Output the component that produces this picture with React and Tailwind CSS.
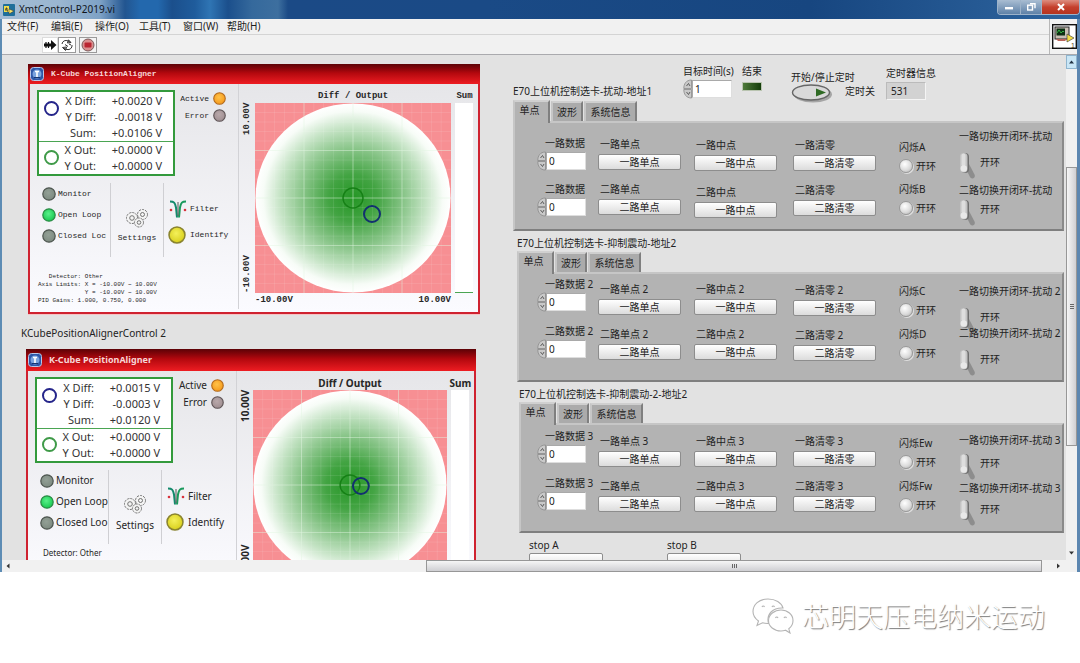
import React, { useId } from "react";

const MENUS = ["文件(F)", "编辑(E)", "操作(O)", "工具(T)", "窗口(W)", "帮助(H)"];

function TitleBar() {
  return (
    <header className="flex h-[19px] shrink-0 items-start justify-between bg-[linear-gradient(90deg,#a3bcd4_0px,#9ab6d0_60px,#7ea2c6_100px,#225590_125px,#2368ad_140px,#2368ad_158px,#1b4f8c_172px,#1f5c9c_195px,#2f75b4_210px,#1b4f8c_228px,#35699c_252px,#3d6f9f_278px,#1b4a86_288px,#1a4a86_45%,#174680_75%,#2e659f_100%)] pl-[3px]">
      <h1 className="flex h-[19px] items-center gap-[4px] text-[10px] text-[#10151c]">
        <svg viewBox="0 0 12 12" className="size-3" aria-hidden="true">
          <rect width="12" height="12" rx="1" fill="#1f6f9a" />
          <rect x="1" y="2" width="5" height="6" fill="#f2dc4c" />
          <path d="M2 6h1V4h1v3h1" stroke="#222" strokeWidth=".8" fill="none" />
          <path d="M6 5l5 2-5 3z" fill="#f6e36a" stroke="#333" strokeWidth=".5" />
        </svg>
        XmtControl-P2019.vi
      </h1>
      <div className="flex h-[15px] overflow-hidden rounded-b-[4px] border border-t-0 border-[#9db3ca]">
        <button aria-label="最小化" className="flex w-[23px] items-center justify-center border-r border-[#9db3ca] bg-linear-to-b from-[#a9bdd2] to-[#5f82a8]">
          <svg viewBox="0 0 10 8" className="h-2 w-[10px]"><rect x="1" y="4" width="8" height="2.4" fill="#fff" /></svg>
        </button>
        <button aria-label="还原" className="flex w-[21px] items-center justify-center border-r border-[#9db3ca] bg-linear-to-b from-[#a9bdd2] to-[#5f82a8]">
          <svg viewBox="0 0 10 8" className="h-2 w-[10px]" fill="none" stroke="#fff" strokeWidth="1.4"><path d="M4 .8h5v4.5" /><rect x="1.7" y="2.2" width="4.8" height="4.8" /></svg>
        </button>
        <button aria-label="关闭" className="flex w-[37px] items-center justify-center bg-linear-to-b from-[#dc8d80] via-[#c5402d] to-[#b5341f]">
          <svg viewBox="0 0 10 8" className="h-2 w-[10px]" stroke="#fff" strokeWidth="2"><path d="M2 1l6 6M8 1L2 7" /></svg>
        </button>
      </div>
    </header>
  );
}

function MenuAndTools() {
  return (
    <div className="flex shrink-0 border-b border-[#aaaaae] bg-[#f1f1f1]">
      <div className="min-w-0 flex-1">
        <nav className="flex h-4 items-center gap-[10px] border-b border-[#d4d4d4] pl-[5px] text-[10px] text-[#1c1c1c]">
          {MENUS.map((m) => (
            <button key={m} className="w-[34px] text-left whitespace-nowrap">{m}</button>
          ))}
        </nav>
        <div className="flex h-[19px] items-center pl-10">
          <button aria-label="运行" className="flex h-4 w-4 items-center justify-center border border-[#dcdcdc] bg-white">
            <svg viewBox="0 0 14 12" className="h-3 w-[14px]"><path d="M1 4.500h7V1l5.500 5L8 11V7.500H1z" fill="#111" /><path d="M3 3v6M5.500 3v6" stroke="#111" strokeWidth="1.2" /></svg>
          </button>
          <button aria-label="连续运行" className="flex h-4 w-[18px] items-center justify-center border border-[#9a9a9a] bg-white">
            <svg viewBox="0 0 14 12" className="h-3 w-[14px]" fill="none" stroke="#333" strokeWidth="1">
              <path d="M2 5a4 4 0 0 1 6-3l2 1M12 6a4 4 0 0 1-5 4.500L4 9.500" /><path d="M8.500.8L11 3.500 7.500 4zM5.500 11.500L2.500 8.500l4-.5z" /><path d="M5 5.500l3 2M9 5l2 1" />
            </svg>
          </button>
          <button aria-label="中止执行" className="ml-[3px] flex h-4 w-[18px] items-center justify-center border border-[#9a9a9a] bg-[#f4f4f4]">
            <svg viewBox="0 0 14 14" className="size-[14px]"><circle cx="7" cy="7" r="6" fill="#d98f8f" stroke="#7a5a5a" strokeWidth="1" /><rect x="3.500" y="4.500" width="7" height="5" rx="1" fill="#bb2632" /></svg>
          </button>
        </div>
      </div>
      <div className="flex w-7 items-center justify-end border-l border-[#b8b8b8]">
        <svg viewBox="0 0 25 25" className="size-[25px]" aria-hidden="true">
          <rect x=".7" y=".7" width="23.600" height="23.600" fill="#fff" stroke="#111" strokeWidth="1.400" />
          <rect x="3" y="3" width="14" height="12" fill="#c9bfb4" stroke="#222" />
          <rect x="4.500" y="4.500" width="8.500" height="7" fill="#0d2f12" />
          <path d="M5 9l2-3 2 3 2-2 1 1" fill="none" stroke="#3fd04f" strokeWidth=".8" />
          <path d="M4 15h11l-2 2H6z" fill="#b9645a" />
          <path d="M15 10l7 4-7 4z" fill="#f4dd45" stroke="#333" strokeWidth=".6" />
          <text x="19" y="23.500" fontSize="7" fill="#5b3a12" fontFamily="Liberation Sans">1</text>
        </svg>
      </div>
    </div>
  );
}

function Led({ color, size = "size-[14px]" }) {
  const id = useId();
  return (
    <svg viewBox="0 0 14 14" className={`${size} shrink-0`} aria-hidden="true">
      <defs>
        <radialGradient id={id} cx=".45" cy=".4" r=".6">
          <stop offset="0" stopColor={color[0]} />
          <stop offset="1" stopColor={color[1]} />
        </radialGradient>
      </defs>
      <circle cx="7" cy="7" r="6.200" fill={`url(#${id})`} stroke={color[2]} strokeWidth="1.200" />
    </svg>
  );
}

const ORANGE = ["#ffc24a", "#f59a1b", "#b36a1c"];
const MUTED = ["#b9a9ab", "#a08f92", "#5e5456"];
const GRAY = ["#93a096", "#7d8a80", "#4d554f"];
const GREEN = ["#5af08a", "#18c850", "#2a8a45"];
const YELLOW = ["#f4f05a", "#d8cf1c", "#8a8430"];

function Plot({ point }) {
  const id = useId();
  const minor = Array.from({ length: 19 }, (_, i) => (i + 1) * 9.8);
  return (
    <svg viewBox="0 0 196 190" preserveAspectRatio="none" className="h-[190px] w-full bg-[#f78f93]" role="img" aria-label="Diff / Output">
      <defs>
        <radialGradient id={id}>
          <stop offset="0" stopColor="#249624" />
          <stop offset=".25" stopColor="#43a443" />
          <stop offset=".5" stopColor="#83c283" />
          <stop offset=".75" stopColor="#c6e4c6" />
          <stop offset=".92" stopColor="#f7fcf7" />
          <stop offset="1" stopColor="#ffffff" />
        </radialGradient>
      </defs>
      <ellipse cx="98" cy="95" rx="97.500" ry="94.500" fill={`url(#${id})`} />
      <g stroke="#fff" strokeOpacity=".1">
        {minor.map((v) => (
          <path key={v} d={`M${v} 0V190M0 ${v * 0.97}H196`} />
        ))}
      </g>
      <path d="M49 0V190M98 0V190M147 0V190M0 47.500H196M0 95H196M0 142.500H196" stroke="#dff5df" strokeOpacity=".4" />
      <circle cx="98" cy="95" r="10" fill="none" stroke="#168016" strokeWidth="1.500" />
      <circle cx={point[0]} cy={point[1]} r="8" fill="none" stroke="#12306f" strokeWidth="2" />
    </svg>
  );
}

function Readout({ values }) {
  return (
    <div className="w-[138px] border-2 border-[#339a3c] bg-white text-[11px] leading-4 text-[#333]">
      {[
        { ring: "border-[#25258a]", rows: [["X Diff:", values[0]], ["Y Diff:", values[1]], ["Sum:", values[2]]] },
        { ring: "border-[#3f9a48]", rows: [["X Out:", "+0.0000 V"], ["Y Out:", "+0.0000 V"]] },
      ].map((group, i) => (
        <div key={group.ring} className={i ? "flex border-t border-[#4aa552]" : "flex pt-px"}>
          <span className={`mt-2 ml-[5px] size-[15px] shrink-0 rounded-full border-2 ${group.ring}`} />
          <dl className="grid flex-1 grid-cols-[37px_66px]">
            {group.rows.map(([k, v]) => (
              <React.Fragment key={k}>
                <dt className="text-right whitespace-nowrap">{k}</dt>
                <dd className="text-right whitespace-nowrap">{v}</dd>
              </React.Fragment>
            ))}
          </dl>
        </div>
      ))}
    </div>
  );
}

function Gears() {
  return (
    <svg viewBox="0 0 24 20" className="h-5 w-6" fill="#f4f4f4" stroke="#666" strokeWidth=".9" aria-hidden="true">
      <circle cx="7" cy="10" r="5.500" strokeDasharray="2.200 1" />
      <circle cx="7" cy="10" r="2.300" />
      <circle cx="17.500" cy="6.500" r="5" strokeDasharray="2.200 1" />
      <circle cx="17.500" cy="6.500" r="2" />
      <circle cx="14" cy="14.500" r="4.500" strokeDasharray="2.200 1" />
      <circle cx="14" cy="14.500" r="1.800" />
    </svg>
  );
}

function FilterIcon() {
  return (
    <svg viewBox="0 0 20 20" className="size-5" fill="none" aria-hidden="true">
      <path d="M2 2.500c4 0 5 1 6 6l1 10" stroke="#138a6c" strokeWidth="2" />
      <path d="M18 2.500c-4 0-5 1-6 6l-1 10" stroke="#1a9a5c" strokeWidth="2" />
      <path d="M10 3v14" stroke="#555" strokeWidth="1" />
      <circle cx="3" cy="11" r="1.300" fill="#d8323c" />
      <circle cx="17" cy="11" r="1.300" fill="#d8323c" />
    </svg>
  );
}

function Aligner({ title, values, mono, point, details, limits, className }) {
  const small = mono ? "font-[Liberation_Mono,monospace] text-[8px]" : "text-[10px]";
  const axis = mono ? "font-[Liberation_Mono,monospace] text-[9px] font-bold" : "text-[10px] font-bold";
  return (
    <section className={`border-x-2 border-b-2 border-[#cf2230] shadow-[0_1px_0_#f6c4c4] ${className}`}>
      <h2 className={`-mx-[2px] flex items-center gap-[7px] bg-linear-to-b from-[#5c0206] via-[#b3080e] via-45% to-[#ee1c22] pl-[2px] font-bold text-[#f7d6d6] ${mono ? "h-5 font-[Liberation_Mono,monospace] text-[8px]" : "h-[22px] text-[9px]"}`}>
        <svg viewBox="0 0 14 14" className="size-[14px]" aria-hidden="true">
          <rect x=".5" y=".5" width="13" height="13" rx="3" fill="#2d57a8" stroke="#b8c8e8" strokeWidth="1" />
          <circle cx="7" cy="7" r="4.500" fill="#7aa3de" />
          <path d="M5 4.500h4M7 4.500v6" stroke="#fff" strokeWidth="1.600" />
          <path d="M4 10.500h6" stroke="#17356f" strokeWidth="1" />
        </svg>
        {title}
      </h2>
      <div className="flex bg-linear-to-b from-[#e6e6e9] to-[#fbfbff] pb-[3px] text-[#262626]">
        <div className="w-[209px] shrink-0 border-r border-[#d2d2d6] pl-[7px]">
          <div className="flex pt-[6px]">
            <Readout values={values} />
            <ul className={`w-[51px] ${small}`}>
              {[["Active", ORANGE], ["Error", MUTED]].map(([name, c]) => (
                <li key={name} className="flex h-[17px] items-center justify-end gap-1">
                  {name}
                  <Led color={c} size="size-[13px]" />
                </li>
              ))}
            </ul>
          </div>
          <div className={`mt-[7px] flex h-[74px] ${small}`}>
            <ul className="w-[73px] pl-[5px]">
              {[["Monitor", GRAY], ["Open Loop", GREEN], [mono ? "Closed Loc" : "Closed Loo", GRAY]].map(([name, c]) => (
                <li key={name} className="flex h-[21px] items-center gap-[2px] overflow-hidden whitespace-nowrap">
                  <Led color={c} />
                  {name}
                </li>
              ))}
            </ul>
            <button className="flex w-[54px] flex-col items-center justify-center gap-1 border-x border-[#cfcfd3] pt-3">
              <Gears />
              Settings
            </button>
            <div className="flex flex-col justify-center gap-1 pt-1 pl-1">
              <button className="flex h-[22px] items-center gap-[2px]"><FilterIcon />Filter</button>
              <button className="flex h-[22px] items-center gap-1"><Led color={YELLOW} size="size-[18px]" />Identify</button>
            </div>
          </div>
          <pre className={mono ? "mt-4 pl-px font-[Liberation_Mono,monospace] text-[6px] leading-2" : "mt-1 pl-2 font-[Noto_Sans,sans-serif] text-[8px] leading-[10px]"}>
            {details}
          </pre>
        </div>
        <div className={`grid min-w-0 flex-1 grid-cols-[16px_1fr_27px] pt-[5px] ${axis}`}>
          <span />
          <span className="h-[14px] text-center leading-[14px]">Diff / Output</span>
          <span className="h-[14px] text-center leading-[14px]">Sum</span>
          <div className="flex rotate-180 items-center justify-between leading-3 [writing-mode:vertical-rl]">
            <span>-10.00V</span>
            <span>10.00V</span>
          </div>
          <Plot point={point} />
          <div className="mr-[5px] ml-1 flex h-[190px] flex-col justify-end bg-white"><div className="h-px bg-[#4aa552]" /></div>
          {limits && (
            <div className="col-start-2 flex h-4 items-center justify-between"><span>{limits[0]}</span><span>{limits[1]}</span></div>
          )}
        </div>
      </div>
    </section>
  );
}

function Spinner() {
  return (
    <button aria-label="增减" className="shrink-0">
      <svg viewBox="0 0 9 20" className="h-5 w-[9px]" fill="#c9c9c9" stroke="#8a8a8a" strokeWidth=".8">
        <path d="M8.500 1C3 1 .8 5 .8 9.500h7.700z" /><path d="M8.500 19C3 19 .8 15 .8 10.500h7.700z" />
        <path d="M3.500 7L5.500 4.500 7 7M3.500 13L5.500 15.500 7 13" fill="none" stroke="#444" />
      </svg>
    </button>
  );
}

function NumberField({ label, value, labelClass }) {
  const id = useId();
  return (
    <>
      <label htmlFor={id} className={`block h-[14px] leading-[14px] whitespace-nowrap ${labelClass}`}>{label}</label>
      <div className="mt-[2px] flex h-[18px] items-center">
        <Spinner />
        <input id={id} defaultValue={value} className="h-[18px] w-10 border border-t-[#a9a9a9] border-r-[#dedede] border-b-[#dedede] border-l-[#a9a9a9] bg-white px-[2px] text-[10px] text-[#222]" />
      </div>
    </>
  );
}

function PushButton({ label, text }) {
  const id = useId();
  return (
    <>
      <label htmlFor={id} className="block h-[14px] pl-[2px] leading-[14px] whitespace-nowrap">{label}</label>
      <button id={id} className="mt-[3px] flex h-4 w-[83px] items-center justify-center rounded-[2px] border border-[#8d8d8d] bg-linear-to-b from-white to-[#dcdcdc] leading-none">{text}</button>
    </>
  );
}

function RoundLed({ label }) {
  const id = useId();
  return (
    <>
      <label htmlFor={id} className="block h-[14px] leading-[14px] whitespace-nowrap">{label}</label>
      <div className="mt-1 flex h-4 items-center gap-[3px]">
        <input id={id} type="checkbox" className="size-[14px] appearance-none rounded-full border border-[#9a9a9a] bg-[radial-gradient(circle_at_40%_35%,#ffffff,#dcdcdc_55%,#b0b0b0)] shadow-[1px_1px_0_#dedede]" />
        <span>开环</span>
      </div>
    </>
  );
}

function Lever({ label, gap }) {
  const id = useId();
  return (
    <>
      <label htmlFor={id} className="block h-[14px] leading-[14px] whitespace-nowrap">{label}</label>
      <div className={`flex h-6 items-start gap-1 ${gap}`}>
        <button id={id} role="switch" aria-checked="false" aria-label={label}>
          <svg viewBox="0 0 17 27" className="h-[27px] w-[17px]">
            <path d="M7 17L10 12L15.500 22.500C17 26 13 28 11 25z" fill="#8d8d8d" />
            <rect x="2" y="1" width="8" height="20" rx="4" fill="#6f6f6f" />
            <rect x="1" y="1" width="7.500" height="19.500" rx="3.700" fill="#c4c4c4" />
            <rect x="2.500" y="1.500" width="4" height="13" rx="2" fill="#dedede" />
            <ellipse cx="4.800" cy="16.500" rx="3.200" ry="3.200" fill="#e9e9e9" />
          </svg>
        </button>
        <span className="leading-5">开环</span>
      </div>
    </>
  );
}

const CARDS = [
  {
    title: "E70上位机控制选卡-扰动-地址1", indent: "", suffix: "", single2: "二路单点", leds: ["闪烁A", "闪烁B"],
    pads: ["pt-[15px]", "pt-4", "pt-[17px]", "pt-[17px]", "pt-[19px]", "pt-2"],
    pitch: ["h-[46px]", "h-[45px]", "h-[47px]", "h-[45px]", "h-[42px]", "h-[54px]"],
    gaps: ["mt-[9px]", "mt-[2px]"],
  },
  {
    title: "E70上位机控制选卡-抑制震动-地址2", indent: "ml-1", suffix: " 2", single2: "二路单点 2", leds: ["闪烁C", "闪烁D"],
    pads: ["pt-[5px]", "pt-[10px]", "pt-[10px]", "pt-[11px]", "pt-3", "pt-3"],
    pitch: ["h-[47px]", "h-[45px]", "h-[45px]", "h-[45px]", "h-[43px]", "h-[42px]"],
    gaps: ["mt-[9px]", "mt-[9px]"],
  },
  {
    title: "E70上位机控制选卡-抑制震动-2-地址2", indent: "ml-[6px]", suffix: " 3", single2: "二路单点", leds: ["闪烁Ew", "闪烁Fw"],
    pads: ["pt-[6px]", "pt-[11px]", "pt-[11px]", "pt-[11px]", "pt-[13px]", "pt-[10px]"],
    pitch: ["h-[47px]", "h-[45px]", "h-[45px]", "h-[45px]", "h-[43px]", "h-[48px]"],
    gaps: ["mt-[6px]", "mt-[4px]"],
  },
];

function CardBody({ card }) {
  const s = card.suffix;
  const columns = [
    ["一路数据", "二路数据"].map((t) => <NumberField key={t} label={t + s} value="0" labelClass="pl-2" />),
    [<PushButton key="a" label={"一路单点" + s} text="一路单点" />, <PushButton key="b" label={card.single2} text="二路单点" />],
    ["一路中点", "二路中点"].map((t) => <PushButton key={t} label={t + s} text="一路中点" />),
    ["一路清零", "二路清零"].map((t) => <PushButton key={t} label={t + s} text={t} />),
    card.leds.map((t) => <RoundLed key={t} label={t} />),
    ["一路切换开闭环-扰动", "二路切换开闭环-扰动"].map((t, i) => <Lever key={t} label={t + s} gap={card.gaps[i]} />),
  ];
  return (
    <div role="tabpanel" className="grid h-[110px] grid-cols-[61px_96px_99px_106px_60px_105px] justify-end border-2 border-t-[#c6c6c6] border-r-[#8a8a8a] border-b-[#7f7f7f] border-l-[#c6c6c6] bg-[#b3b3b3]">
      {columns.map((groups, c) => (
        <div key={c} className={`-mt-[2px] -mr-[2px] ml-[2px] ${card.pads[c]}`}>
          {groups.map((g, i) => (
            <div key={i} className={card.pitch[c]}>{g}</div>
          ))}
        </div>
      ))}
    </div>
  );
}

function Tabs() {
  return (
    <div role="tablist" className="flex h-5 items-end gap-px">
      <button role="tab" aria-selected="true" className="-mb-[2px] flex h-[23px] w-[37px] items-center justify-center border-2 border-b-0 border-t-[#d0d0d0] border-r-[#7f7f7f] border-l-[#c6c6c6] bg-[#b3b3b3] pr-1 pb-1">单点</button>
      <button role="tab" aria-selected="false" className="flex h-5 w-8 items-center justify-center border-2 border-b-0 border-t-[#cfcfcf] border-r-[#7f7f7f] border-l-[#c6c6c6] bg-[#ababab]">波形</button>
      <button role="tab" aria-selected="false" className="flex h-5 w-[53px] items-center justify-center border-2 border-b-0 border-t-[#cfcfcf] border-r-[#7f7f7f] border-l-[#c6c6c6] bg-[#ababab] whitespace-nowrap">系统信息</button>
    </div>
  );
}

function TimerRow() {
  return (
    <div className="flex h-11 items-start whitespace-nowrap">
      <h2 className="w-[170px] pt-[29px] leading-[14px]">{CARDS[0].title}</h2>
      <div className="w-[59px] pt-[9px]">
        <NumberField label="目标时间(s)" value="1" labelClass="" />
      </div>
      <div className="w-[49px] pt-[9px] leading-[14px]">
        结束
        <div className="mt-1 h-[9px] w-5 border border-[#b9c4b0] bg-linear-to-r from-[#4e7a3a] to-[#143d0a]" />
      </div>
      <div className="w-[54px] pt-[15px] leading-[14px]">
        <label htmlFor="timer">开始/停止定时</label>
        <button id="timer" className="block">
          <svg viewBox="0 0 42 19" className="h-[19px] w-[42px]">
            <ellipse cx="22" cy="10.500" rx="19" ry="8" fill="#a5a5a5" />
            <ellipse cx="20" cy="8.500" rx="18.500" ry="7.500" fill="#d9d9d9" stroke="#666" strokeWidth="1.400" />
            <path d="M25 4.500l10 4-10 4z" fill="#2f6a24" />
          </svg>
        </button>
      </div>
      <span className="w-[41px] pt-[29px] leading-[14px]">定时关</span>
      <div className="pt-[11px] leading-[14px]">
        定时器信息
        <output className="mt-[2px] flex h-[18px] w-10 items-center border border-t-[#bbb] border-r-[#f4f4f4] border-b-[#f4f4f4] border-l-[#bbb] bg-[#d2d2d2] px-1">531</output>
      </div>
    </div>
  );
}

function Scrollbars() {
  return (
    <div className="flex h-3 shrink-0 items-stretch bg-[#f1f1f1]">
      <button aria-label="向左滚动" className="w-3"><svg viewBox="0 0 12 12" className="size-3"><path d="M7.500 3.500v5L4.500 6z" fill="#333" /></svg></button>
      <div className="flex flex-1">
        <div className="grow-[413] basis-0" />
        <div className="flex grow-[615] basis-0 items-center justify-center gap-px border border-[#979797] bg-linear-to-b from-[#f6f6f6] to-[#cfcfd3]">
          <i className="h-1 w-px bg-[#666]" /><i className="h-1 w-px bg-[#666]" /><i className="h-1 w-px bg-[#666]" />
        </div>
        <div className="grow-[10] basis-0" />
      </div>
      <button aria-label="向右滚动" className="mr-[13px] w-3"><svg viewBox="0 0 12 12" className="size-3"><path d="M5 3.500v5L8 6z" fill="#333" /></svg></button>
    </div>
  );
}

export default function App() {
  return (
    <div className="flex h-screen flex-col bg-white font-[Noto_Sans,Noto_Sans_CJK_SC,sans-serif] text-[10px] text-[#222]">
      <main className="flex min-h-0 flex-1 flex-col">
        <TitleBar />
        <div className="flex min-h-0 flex-1 flex-col border-r-[3px] border-l-2 border-r-[#5c86b0] border-l-[#5d8cb4]">
          <MenuAndTools />
          <div className="flex min-h-0 flex-1 overflow-hidden bg-[#e2e2e2]">
            <div className="w-[511px] shrink-0 pl-6">
              <Aligner
                mono
                title="K-Cube PositionAligner"
                values={["+0.0020 V", "-0.0018 V", "+0.0106 V"]}
                point={[117, 111]}
                details={"   Detector: Other\nAxis Limits: X = -10.00V ~ 10.00V\n             Y = -10.00V ~ 10.00V\nPID Gains: 1.000, 0.750, 0.000"}
                limits={["-10.00V", "10.00V"]}
                className="mt-[9px] ml-[2px] w-[452px]"
              />
              <p className="-ml-[5px] mt-3 h-[14px] leading-[14px]">KCubePositionAlignerControl 2</p>
              <Aligner
                title="K-Cube PositionAligner"
                values={["+0.0015 V", "-0.0003 V", "+0.0120 V"]}
                point={[109, 96]}
                details="Detector: Other"
                className="mt-[9px] w-[450px]"
              />
            </div>
            <div className="min-w-0 flex-1">
              <TimerRow />
              {CARDS.map((card, i) => (
                <section key={card.title} className={card.indent}>
                  {i > 0 && <h2 className="mt-[5px] h-[14px] leading-[14px]">{card.title}</h2>}
                  <div className="pt-[2px]"><Tabs /></div>
                  <CardBody card={card} />
                </section>
              ))}
              <div className="mt-[5px] flex gap-16 pl-4">
                {["stop A", "stop B"].map((t) => (
                  <div key={t} className="w-[74px]">
                    <label htmlFor={t.replace(" ", "")} className="block h-[14px] leading-[14px]">{t}</label>
                    <button id={t.replace(" ", "")} aria-label={t} className="mt-px block h-4 w-[74px] rounded-[2px] border border-[#8d8d8d] bg-linear-to-b from-white to-[#dcdcdc]" />
                  </div>
                ))}
              </div>
            </div>
            <div className="ml-[2px] flex w-[11px] shrink-0 flex-col bg-[#f0f0f0]">
              <button aria-label="向上滚动" className="h-[14px] border border-[#8fb5cf] bg-[#c9e6f6]"><svg viewBox="0 0 9 12" className="h-3 w-[9px]"><path d="M2 7.500h5L4.500 4.500z" fill="#234" /></svg></button>
              <div className="flex min-h-0 flex-1 flex-col">
                <div className="grow-[98] basis-0" />
                <div className="flex grow-[279] basis-0 flex-col items-center justify-center gap-px border border-[#979797] bg-linear-to-r from-[#f6f6f6] to-[#cfcfd3]">
                  <i className="h-px w-1 bg-[#666]" /><i className="h-px w-1 bg-[#666]" /><i className="h-px w-1 bg-[#666]" />
                </div>
                <div className="grow-[100] basis-0" />
              </div>
              <button aria-label="向下滚动" className="h-[14px]"><svg viewBox="0 0 11 12" className="h-3 w-[11px]"><path d="M3 4.500h5L5.500 7.500z" fill="#333" /></svg></button>
            </div>
          </div>
          <Scrollbars />
        </div>
      </main>
      <footer className="flex h-[91px] shrink-0 items-center justify-end gap-[7px] pr-[35px] pb-1">
        <svg viewBox="0 0 44 36" className="h-9 w-11" fill="#fff" stroke="#b4b4b4" strokeWidth="1.100" aria-hidden="true">
          <path d="M17 1C8 1 2 6.500 2 13.500c0 4 2 7 5.500 9.500L6 27.500l5.500-2.700c2 .6 4 .8 6 .7C15 16 22 9.500 32 10 30.500 4.500 24.500 1 17 1z" />
          <path d="M42 22.500c0-6-5.500-10.500-12-10.500s-12.500 4.500-12.500 10.500S23 33 30 33c1.700 0 3-.3 4.500-.8L39 35l-1.200-4.200c2.600-2 4.200-4.800 4.200-8.300z" />
          <path d="M11 9c.5-1.300 2-1.300 2.500 0M21 9c.5-1.300 2-1.300 2.500 0M24.500 20c.5-1.300 2-1.300 2.500 0M33 20c.5-1.300 2-1.300 2.500 0" fill="none" />
        </svg>
        <p className="font-[Noto_Sans_CJK_SC,sans-serif] text-[27px] leading-8 font-light text-white [text-shadow:1px_1px_1px_#777]">芯明天压电纳米运动</p>
      </footer>
    </div>
  );
}
